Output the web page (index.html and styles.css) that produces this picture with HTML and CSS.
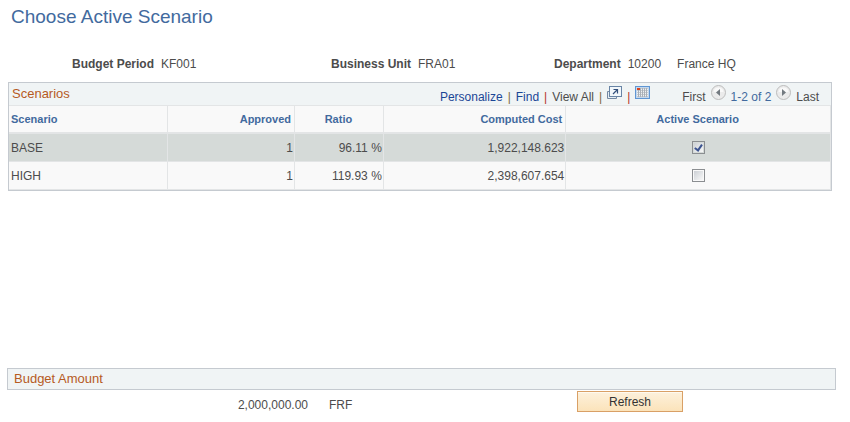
FILE: index.html
```html
<!DOCTYPE html>
<html lang="en">
  <head>
    <meta charset="UTF-8" />
    <meta name="viewport" content="width=device-width, initial-scale=1.0" />
    <title>Choose Active Scenario</title>
    <link rel="stylesheet" href="styles.css">
  </head>
  <body>
    <h1>Choose Active Scenario</h1>

    <dl class="keys">
      <div class="key">
        <dt>Budget Period</dt>
        <dd>KF001</dd>
      </div>
      <div class="key">
        <dt>Business Unit</dt>
        <dd>FRA01</dd>
      </div>
      <div class="key">
        <dt>Department</dt>
        <dd>10200</dd>
        <dd class="descr">France HQ</dd>
      </div>
    </dl>

    <section class="scenarios">
      <div class="grid-header">
        <h2>Scenarios</h2>
        <div class="grid-tools">
          <a href="#">Personalize</a>
          <span class="bar">|</span>
          <a href="#">Find</a>
          <span class="bar red">|</span>
          <span>View All</span>
          <span class="bar">|</span>
          <a href="#" class="icon" aria-label="Zoom grid">
            <svg width="15" height="14" viewBox="0 0 15 14">
              <path d="M2.500 5.500h-2v7h9v-2" fill="#e4edf3" stroke="#7488a3" />
              <rect x="2.500" y=".5" width="12" height="10" fill="#f2f7fb" stroke="#6884a6" />
              <path d="M6 8l4.500-4.500M6.500 3.500h4v4" fill="none" stroke="#33507c" stroke-width="1.200" />
            </svg>
          </a>
          <span class="bar red">|</span>
          <a href="#" class="icon" aria-label="Download">
            <svg width="15" height="13" viewBox="0 0 15 13">
              <rect x=".5" y=".5" width="14" height="12" fill="#c4d8ee" stroke="#5f96d3" />
              <rect x="2" y="2" width="11" height="9" fill="#a9afb6" />
              <path d="M2 3.500h11M2 5.500h11M2 7.500h11M2 9.500h11" stroke="#eef1f3" stroke-dasharray="1 1" />
              <path d="M2 2.500h11M2 4.500h11M2 6.500h11M2 8.500h11M2 10.500h11" stroke="#c6cbd0" stroke-dasharray="1 1" />
              <rect x="2" y="2" width="3" height="2" fill="#d9441f" />
            </svg>
          </a>
        </div>
        <div class="grid-nav">
          <span>First</span>
          <button type="button" class="arrow" aria-label="Previous">
            <svg width="15" height="15" viewBox="0 0 15 15">
              <circle cx="7.500" cy="7.500" r="7" fill="#ebebeb" stroke="#bcbcbc" />
              <path d="M2.500 7a5 4.500 0 0 1 10 0z" fill="#f9f9f9" />
              <path d="M9 4v7L5 7.500z" fill="#737a80" />
            </svg>
          </button>
          <span class="range">1-2 of 2</span>
          <button type="button" class="arrow" aria-label="Next">
            <svg width="15" height="15" viewBox="0 0 15 15">
              <circle cx="7.500" cy="7.500" r="7" fill="#ebebeb" stroke="#bcbcbc" />
              <path d="M2.500 7a5 4.500 0 0 1 10 0z" fill="#f9f9f9" />
              <path d="M6 4v7l4-3.500z" fill="#737a80" />
            </svg>
          </button>
          <span>Last</span>
        </div>
      </div>

      <table>
        <colgroup>
          <col class="col-scenario" />
          <col class="col-approved" />
          <col class="col-ratio" />
          <col class="col-cost" />
          <col />
        </colgroup>
        <thead>
          <tr>
            <th>Scenario</th>
            <th class="num">Approved</th>
            <th class="center">Ratio</th>
            <th class="num">Computed Cost</th>
            <th class="center">Active Scenario</th>
          </tr>
        </thead>
        <tbody>
          <tr class="selected">
            <td>BASE</td>
            <td class="num">1</td>
            <td class="num">96.11 %</td>
            <td class="num">1,922,148.623</td>
            <td class="center"><input type="checkbox" aria-label="BASE active" checked /></td>
          </tr>
          <tr>
            <td>HIGH</td>
            <td class="num">1</td>
            <td class="num">119.93 %</td>
            <td class="num">2,398,607.654</td>
            <td class="center"><input type="checkbox" aria-label="HIGH active" /></td>
          </tr>
        </tbody>
      </table>
    </section>

    <section class="budget">
      <h2>Budget Amount</h2>
      <div class="budget-row">
        <span class="amount">2,000,000.00</span>
        <span class="currency">FRF</span>
        <button type="button" class="refresh-btn">Refresh</button>
      </div>
    </section>
  </body>
</html>
```

FILE: styles.css
```css
body {
  margin: 0;
  font-family: Arial, "Liberation Sans", sans-serif;
  font-size: 12px;
  line-height: 16px;
  color: #4c4c4c;
  background-color: #fff;
}
h1 {
  margin: 0;
  padding: 4px 11px 0;
  font-size: 19px;
  line-height: 26px;
  font-weight: normal;
  color: #426a9e;
}
h2 {
  margin: 0;
  font-size: 13px;
  font-weight: normal;
  color: #b65a1f;
}
a {
  color: #1b4695;
  text-decoration: none;
}

/* key fields */
.keys {
  display: grid;
  grid-template-columns: 259fr 223fr 296fr;
  margin: 26px 0 10px;
  padding-left: 72px;
}
.key {
  display: flex;
  gap: 7px;
}
.key dt {
  font-weight: bold;
}
.key dd {
  margin: 0;
}
.key .descr {
  margin-left: 9px;
}

/* scenario grid */
.scenarios {
  margin: 0 18px 0 8px;
  border: 1px solid #c5cad0;
}
.grid-header {
  display: flex;
  padding: 0 12px 0 3px;
  background-color: #f0f4f5;
}
.grid-header h2 {
  flex: 1;
  line-height: 22px;
}
.grid-tools,
.grid-nav {
  display: flex;
  align-items: flex-start;
  gap: 5px;
  padding-top: 2px;
}
.grid-tools > *,
.grid-nav > span {
  padding-top: 4px;
}
.grid-tools > .icon {
  padding-top: 1px;
}
.grid-nav {
  margin-left: 32px;
}
.grid-nav .range {
  color: #426a9e;
}
.bar {
  color: #7d6a3c;
}
.bar.red {
  color: #b5332a;
}
.icon svg,
.arrow svg {
  display: block;
}
.arrow {
  padding: 0;
  border: none;
  background: none;
  cursor: pointer;
}
table {
  width: 100%;
  table-layout: fixed;
  border-collapse: separate;
  border-spacing: 0;
  border-top: 1px solid #e3e5e6;
  background-color: #f9f9f9;
}
.col-scenario {
  width: 19.3%;
}
.col-approved {
  width: 15.5%;
}
.col-ratio {
  width: 10.8%;
}
.col-cost {
  width: 22.2%;
}
th,
td {
  height: 27px;
  padding: 0 1px 0 2px;
  border-right: 1px solid #e3e5e6;
  border-bottom: 1px solid #e3e5e6;
  text-align: left;
}
th {
  height: 26px;
  padding: 0 3px 0 2px;
  border-bottom-width: 2px;
  font-size: 11px;
  color: #426a9e;
}
.num {
  text-align: right;
}
.center {
  text-align: center;
}
.selected td {
  background-color: #d5dad8;
}
input[type="checkbox"] {
  appearance: none;
  display: block;
  width: 13px;
  height: 13px;
  margin: 0 auto;
  border: 1px solid #8b8e91;
  background: linear-gradient(135deg, #ccd0d5, #f8f8f8) content-box #f6f6f6;
  padding: 1px;
}
input[type="checkbox"]:checked::before {
  content: "";
  display: block;
  width: 3px;
  height: 6px;
  margin-left: 2px;
  border: solid #3c5490;
  border-width: 0 2px 2px 0;
  transform: rotate(35deg);
}

/* budget amount */
.budget {
  margin: 177px 14px 0 7px;
}
.budget h2 {
  padding: 0 6px;
  border: 1px solid #c5cad0;
  line-height: 20px;
  background-color: #f0f4f5;
}
.budget-row {
  display: grid;
  grid-template-columns: 301fr 269fr 259fr;
  align-items: start;
  padding-top: 1px;
}
.amount {
  text-align: right;
}
.currency {
  padding-left: 21px;
}
.amount,
.currency {
  padding-top: 6px;
}
.refresh-btn {
  justify-self: start;
  width: 106px;
  height: 21px;
  padding: 1px 0 0;
  border: 1px solid #d9a066;
  font-family: inherit;
  font-size: 12px;
  color: #333;
  background: linear-gradient(#fdf1dc, #fbe3ba);
  box-shadow: inset 0 1px #fffaf0;
  cursor: pointer;
}
```
